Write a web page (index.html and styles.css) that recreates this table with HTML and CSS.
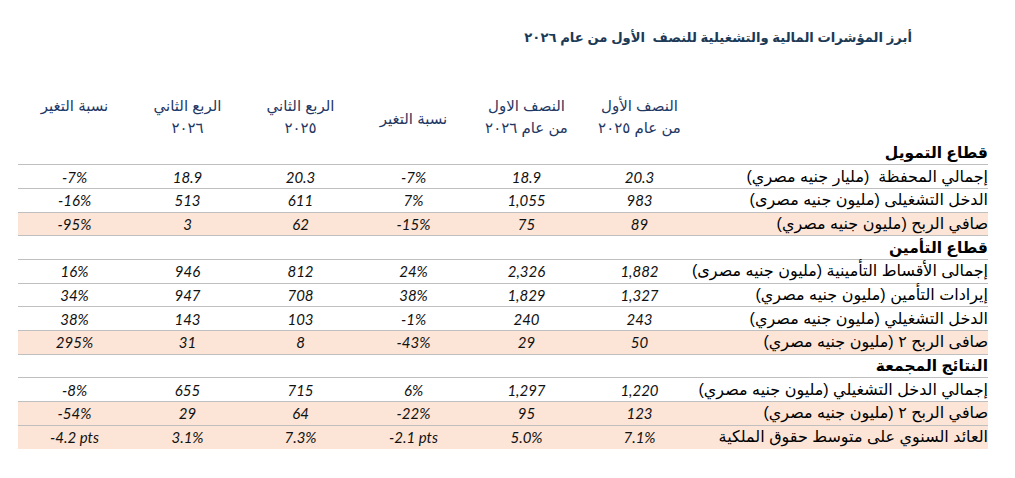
FILE: index.html
```html
<!DOCTYPE html>
<html lang="ar" dir="rtl">
<head>
<meta charset="utf-8">
<title>أبرز المؤشرات المالية والتشغيلية</title>
<link rel="stylesheet" href="styles.css">
</head>
<body>
<main class="report">
  <h1 class="title">أبرز المؤشرات المالية والتشغيلية للنصف&nbsp; الأول من عام ٢٠٢٦</h1>
  <table class="kpi">
    <colgroup>
      <col class="c-label">
      <col class="c-num"><col class="c-num"><col class="c-num">
      <col class="c-num"><col class="c-num"><col class="c-num">
    </colgroup>
    <thead>
      <tr class="head">
        <th></th>
        <th>النصف الأول<br>من عام ٢٠٢٥</th>
        <th>النصف الاول<br>من عام ٢٠٢٦</th>
        <th><span class="mid">نسبة التغير</span></th>
        <th>الربع الثاني<br>٢٠٢٥</th>
        <th>الربع الثاني<br>٢٠٢٦</th>
        <th>نسبة التغير</th>
      </tr>
    </thead>
    <tbody>
      <tr class="section"><td class="label">قطاع التمويل</td><td></td><td></td><td></td><td></td><td></td><td></td></tr>
      <tr><td class="label">إجمالي المحفظة&nbsp; (مليار جنيه مصري)</td><td class="num">20.3</td><td class="num">18.9</td><td class="num">-7%</td><td class="num">20.3</td><td class="num">18.9</td><td class="num">-7%</td></tr>
      <tr><td class="label">الدخل التشغيلى (مليون جنيه مصرى)</td><td class="num">983</td><td class="num">1,055</td><td class="num">7%</td><td class="num">611</td><td class="num">513</td><td class="num">-16%</td></tr>
      <tr class="hl"><td class="label">صافي الربح (مليون جنيه مصري)</td><td class="num">89</td><td class="num">75</td><td class="num">-15%</td><td class="num">62</td><td class="num">3</td><td class="num">-95%</td></tr>
      <tr class="section"><td class="label">قطاع التأمين</td><td></td><td></td><td></td><td></td><td></td><td></td></tr>
      <tr><td class="label">إجمالى الأقساط التأمينية (مليون جنيه مصرى)</td><td class="num">1,882</td><td class="num">2,326</td><td class="num">24%</td><td class="num">812</td><td class="num">946</td><td class="num">16%</td></tr>
      <tr><td class="label">إيرادات التأمين (مليون جنيه مصري)</td><td class="num">1,327</td><td class="num">1,829</td><td class="num">38%</td><td class="num">708</td><td class="num">947</td><td class="num">34%</td></tr>
      <tr><td class="label">الدخل التشغيلي (مليون جنيه مصري)</td><td class="num">243</td><td class="num">240</td><td class="num">-1%</td><td class="num">103</td><td class="num">143</td><td class="num">38%</td></tr>
      <tr class="hl"><td class="label">صافى الربح ٢ (مليون جنيه مصري)</td><td class="num">50</td><td class="num">29</td><td class="num">-43%</td><td class="num">8</td><td class="num">31</td><td class="num">295%</td></tr>
      <tr class="section"><td class="label">النتائج المجمعة</td><td></td><td></td><td></td><td></td><td></td><td></td></tr>
      <tr><td class="label">إجمالي الدخل التشغيلي (مليون جنيه مصري)</td><td class="num">1,220</td><td class="num">1,297</td><td class="num">6%</td><td class="num">715</td><td class="num">655</td><td class="num">-8%</td></tr>
      <tr class="hl"><td class="label">صافي الربح ٢ (مليون جنيه مصري)</td><td class="num">123</td><td class="num">95</td><td class="num">-22%</td><td class="num">64</td><td class="num">29</td><td class="num">-54%</td></tr>
      <tr class="hl last"><td class="label">العائد السنوي على متوسط حقوق الملكية</td><td class="num">7.1%</td><td class="num">5.0%</td><td class="num">-2.1 pts</td><td class="num">7.3%</td><td class="num">3.1%</td><td class="num">-4.2 pts</td></tr>
    </tbody>
  </table>
</main>
</body>
</html>
```
FILE: styles.css
```css
html, body {
  margin: 0;
  padding: 0;
  background: #ffffff;
}

body {
  font-family: "Liberation Sans", "DejaVu Sans", "Noto Sans", sans-serif;
  color: #000000;
}

.report {
  width: 970px;
  padding: 28px 27px 0 18px;
}

.title {
  margin: 0 76px 44px 0;
  height: 20px;
  font-size: 13.2px;
  line-height: 20px;
  font-weight: bold;
  color: #1c3a56;
  text-align: right;
}

.kpi {
  width: 970px;
  table-layout: fixed;
  border-collapse: collapse;
  border-spacing: 0;
}

.c-label { width: 292px; }
.c-num { width: 113px; }

.head th {
  height: 46px;
  padding: 3px 0 0 0;
  vertical-align: top;
  font-weight: normal;
  font-size: 15px;
  line-height: 22px;
  color: #1f3864;
  text-align: center;
}

.head .mid {
  display: block;
  margin-top: 13px;
}

tbody tr {
  height: 23.7px;
}

tbody td {
  padding: 0;
  border-bottom: 1px solid #bfbfbf;
  font-size: 16px;
  line-height: 22px;
  white-space: nowrap;
}

tbody tr.last td {
  border-bottom: none;
}

tbody tr.hl td {
  background: #fce4d6;
}

.label {
  text-align: right;
}

.section .label {
  font-weight: bold;
  font-size: 15.5px;
}

.num {
  direction: ltr;
  text-align: center;
  font-family: "Lato", "Open Sans", sans-serif;
  font-style: italic;
  font-size: 15px;
  color: #111111;
}
```
